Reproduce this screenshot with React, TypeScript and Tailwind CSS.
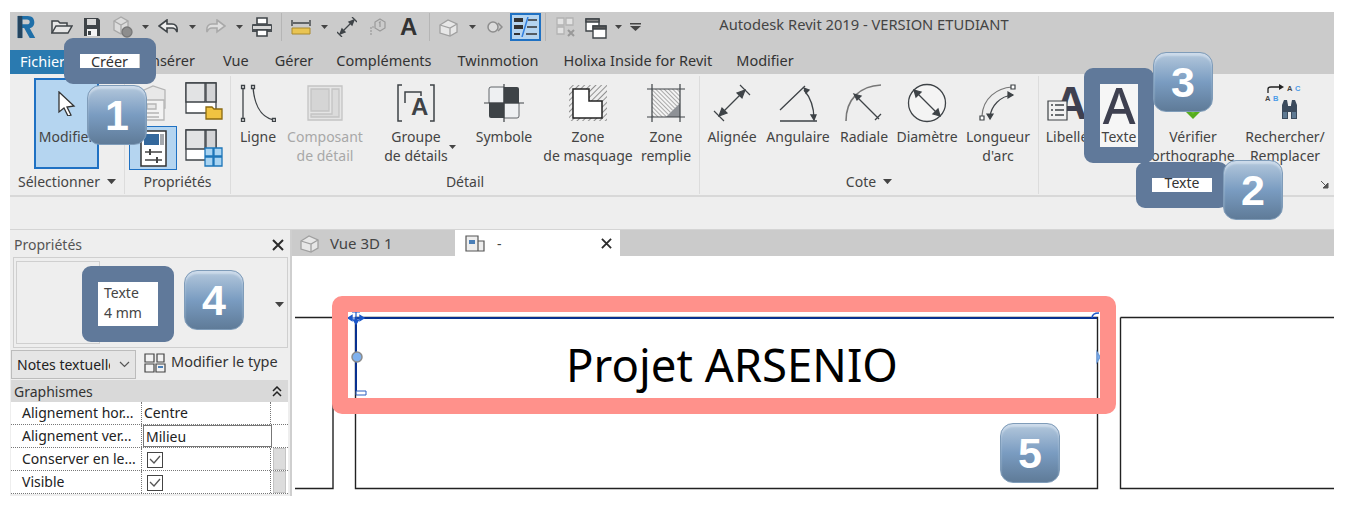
import React from "react";

const D = "#3f4448";

function Drop({ w = 7 }: { w?: number }) {
  return (
    <svg width={w} height={w * 0.57} viewBox="0 0 7 4" className="shrink-0">
      <path d="M0 0h7L3.5 4z" fill="#444" />
    </svg>
  );
}

function Tool({ w, lines, icon, ml = 0, faded = false }: { w: number; lines: string[]; icon: React.ReactNode; ml?: number; faded?: boolean }) {
  return (
    <div style={{ width: w, marginLeft: ml }} className={`flex flex-col items-center shrink-0 ${faded ? "text-[#a8a8a8]" : "text-[#444]"}`}>
      <div className="h-[51px] w-full flex items-center justify-center pt-[2px]">{icon}</div>
      {lines.map((l) => (
        <div key={l} className="leading-[19px] whitespace-nowrap">{l}</div>
      ))}
    </div>
  );
}

function Panel({ w, label, arrow, children, border = true }: { w: number; label: React.ReactNode; arrow?: boolean; children: React.ReactNode; border?: boolean }) {
  return (
    <div style={{ width: w }} className={`shrink-0 h-[118px] mt-[2px] flex flex-col ${border ? "border-r border-[#dcdcdc]" : ""}`}>
      <div className="h-[96px] flex">{children}</div>
      <div className="flex-1 flex items-center justify-center gap-[7px] text-[#444] pb-[2px]">
        {label}
        {arrow && <Drop w={9} />}
      </div>
    </div>
  );
}

function Badge({ n, cls }: { n: string; cls: string }) {
  return (
    <div className={`absolute ${cls} w-[60px] h-[60px] rounded-[13px] border border-[#7f9cb9] bg-gradient-to-b from-[#b4c8dc] via-[#7a9cc1] to-[#5f7b98] flex items-center justify-center text-white font-bold text-[43px] [font-family:'Liberation_Sans',sans-serif] shadow-[inset_0_3px_2px_rgba(225,235,245,0.55)]`}>
      {n}
    </div>
  );
}

function Frame({ cls, children }: { cls: string; children?: React.ReactNode }) {
  return <div className={`absolute ${cls} border-[16px] border-[#60799a] rounded-[9px] overflow-hidden`}>{children}</div>;
}

const IconR = () => (
  <svg width="20" height="24" viewBox="0 0 20 26">
    <path d="M1 1h11c5 0 7 3 7 7 0 3-2 6-5 6l6 11h-6L8 14H6v11H1z" fill="#1f6fa8" />
    <path d="M6 5v5h5c2 0 3-1 3-2.500S13 5 11 5z" fill="#cbcbcb" />
    <path d="M1 1h5v24H1z" fill="#25455f" />
  </svg>
);
const IconOpen = () => (
  <svg width="22" height="16" viewBox="0 0 22 16" fill="#e6e6e6" stroke={D} strokeWidth="1.500">
    <path d="M1 14V2h6l2 2h7v3" />
    <path d="M1 14l4-7h16l-4 7z" />
  </svg>
);
const IconSave = () => (
  <svg width="18" height="20" viewBox="0 0 18 20">
    <path d="M1 1h14l2 2v16H1z" fill="#3e4347" />
    <path d="M4 2h9v6H4z" fill="#d7d7d7" />
    <path d="M4 12h10v7H4z" fill="#f4f4f4" />
    <path d="M5 14h3v4H5z" fill="#3e4347" />
  </svg>
);
const IconCube = () => (
  <svg width="22" height="24" viewBox="0 0 22 24" fill="#dcdcdc" stroke="#a8a8a8" strokeWidth="1.300">
    <path d="M2 6l7-4 7 4v9l-7 4-7-4z" />
    <path d="M2 6l7 4 7-4M9 10v9" />
    <circle cx="15" cy="17" r="5" fill="#8d8d8d" stroke="#777" />
  </svg>
);
const IconUndo = ({ c = D, flip = false }: { c?: string; flip?: boolean }) => (
  <svg width="21" height="16" viewBox="0 0 21 16" fill={c === D ? "#eeeeee" : "#dedede"} stroke={c} strokeWidth="1.600" style={flip ? { transform: "scaleX(-1)" } : undefined}>
    <path d="M9 1L1 7l8 6V9h5c2 0 4 1 5 4 1-6-2-8-5-8H9z" />
  </svg>
);
const IconPrint = () => (
  <svg width="22" height="20" viewBox="0 0 22 20">
    <path d="M6 1h10v6H6z" fill="#fff" stroke={D} strokeWidth="1.600" />
    <path d="M2 7h18a1 1 0 011 1v7H1V8a1 1 0 011-1z" fill="#4a4f53" />
    <path d="M2 9h18v3H2z" fill="#d8d8d8" />
    <path d="M6 13h10v6H6z" fill="#fff" stroke={D} strokeWidth="1.600" />
  </svg>
);
const IconMeasure = () => (
  <svg width="20" height="15" viewBox="0 0 20 15">
    <path d="M1 0v6M19 0v6M2 3h16" stroke={D} strokeWidth="1.400" fill="none" />
    <path d="M1 8h18v6H1z" fill="#e9c452" stroke="#a98a2e" />
  </svg>
);
const IconAligned = () => (
  <svg width="20" height="20" viewBox="0 0 20 20" stroke={D} strokeWidth="1.300" fill={D}>
    <path d="M0 15l5 5M15 0l5 5" />
    <path d="M4 16L16 4" />
    <path d="M3 17l2-5 3 3zM17 3l-2 5-3-3z" />
  </svg>
);
const IconAlignedBig = () => (
  <svg width="38" height="38" viewBox="0 0 38 38" stroke={D} strokeWidth="1.200" fill={D}>
    <path d="M1 27l10 10M27 1l10 10" />
    <path d="M7 31L31 7" />
    <path d="M6 32l3-8 5 5zM32 6l-3 8-5-5z" />
  </svg>
);
const IconTag = () => (
  <svg width="18" height="20" viewBox="0 0 18 20" fill="none" stroke="#9a9a9a" strokeWidth="1.200">
    <path d="M2 18v-8h4" strokeDasharray="2 1" />
    <path d="M11 2l5 3v6l-5 3-5-3V5z" />
    <path d="M10 6l1-1v5" />
  </svg>
);
const IconHouse = ({ c = "#a0a0a0" }: { c?: string }) => (
  <svg width="19" height="19" viewBox="0 0 19 19" fill="#e7e7e7" stroke={c} strokeWidth="1.300">
    <path d="M1 7l8-5 9 4v8l-7 4-10-3z" />
    <path d="M1 7l10 3 7-4M11 10v8" />
  </svg>
);
const IconDiamond = () => (
  <svg width="18" height="18" viewBox="0 0 18 18" fill="#dcdcdc" stroke="#8d8d8d" strokeWidth="1.500">
    <circle cx="8" cy="9" r="5" />
    <path d="M13 5l4 4-4 4" fill="none" />
  </svg>
);
const IconToggle = () => (
  <div className="w-[31px] h-[28px] bg-[#b5d5f0] border-2 border-[#1f71c3] flex items-center justify-center">
    <svg width="25" height="20" viewBox="0 0 25 20">
      <path d="M1 1h9v4H1zM1 8h9v4H1zM1 16h6v2H1z" fill="#333" />
      <path d="M15 3h9M14 10h10M13 17h11" stroke="#333" strokeWidth="1.500" />
      <path d="M15 0L9 20" stroke="#2f7fe0" strokeWidth="1.500" />
    </svg>
  </div>
);
const IconHide = () => (
  <svg width="20" height="22" viewBox="0 0 20 22" fill="#e2e2e2" stroke="#b3b3b3" strokeWidth="1.300">
    <path d="M1 2h7v7H1zM10 2h7v7h-7zM1 11h7v7H1z" />
    <path d="M12 14l6 6M18 14l-6 6" stroke="#999" strokeWidth="2" />
  </svg>
);
const IconWindows = () => (
  <svg width="22" height="24" viewBox="0 0 22 24" fill="#fff" stroke={D} strokeWidth="1.400">
    <path d="M1 4h13v12H1z" />
    <path d="M1 4h13v3H1z" fill="#888" />
    <path d="M8 11h13v12H8z" />
    <path d="M8 11h13v3H8z" fill="#555" />
  </svg>
);
const IconMenu = () => (
  <svg width="11" height="8" viewBox="0 0 11 8">
    <path d="M0 0h11v1.500H0z" fill="#444" />
    <path d="M0 3h11L5.500 8z" fill="#444" />
  </svg>
);
const IconCursor = () => (
  <svg width="18" height="25" viewBox="0 0 18 25">
    <path d="M1 1l15 14-7 1 4 8-3 1-4-8-5 4z" fill="#fff" stroke="#333" strokeWidth="1.300" />
  </svg>
);
const IconFolderPanel = ({ grid = false }: { grid?: boolean }) => (
  <svg width="38" height="38" viewBox="0 0 38 38">
    <path d="M1 1h30v30H1z" fill="#fff" stroke="#3e4347" strokeWidth="1.300" />
    <path d="M1 1h19v19H1z" fill="#e2e3e4" stroke="#3e4347" strokeWidth="1.300" />
    <path d="M21 1h10v19H21z" fill="#d3d4d6" stroke="#3e4347" strokeWidth="1.300" />
    {grid ? (
      <g fill="#a9d4f2" stroke="#1d76b9" strokeWidth="1.300">
        <path d="M20 19h8v8h-8zM29 19h8v8h-8zM20 28h8v9h-8zM29 28h8v9h-8z" />
      </g>
    ) : (
      <path d="M21 25h6l2 2h8v10H21z" fill="#f0c341" stroke="#8b6a11" strokeWidth="1.300" />
    )}
  </svg>
);
const IconFamily = () => (
  <svg width="28" height="36" viewBox="0 0 28 36" fill="#e8e8e8" stroke="#b5b5b5" strokeWidth="1.300">
    <path d="M5 5l9-4 12 4v18H5z" />
    <path d="M3 15h22v20H3z" fill="#f3f3f3" />
    <path d="M8 19h9v5H8zM8 28h12M8 32h12" />
  </svg>
);
const IconProps = () => (
  <svg width="27" height="37" viewBox="0 0 27 37">
    <path d="M1 1h25v35H1z" fill="#fff" stroke="#333" strokeWidth="1.500" />
    <path d="M4 4h15v11H4z" fill="#34689c" />
    <path d="M20 4h4v11h-4z" fill="#a5a9ae" />
    <path d="M5 22h17M5 30h17" stroke="#444" strokeWidth="1.300" />
    <path d="M10 19v6M17 27v6" stroke="#444" strokeWidth="2" />
  </svg>
);
const IconLine = () => (
  <svg width="36" height="38" viewBox="0 0 36 38" fill="none" stroke="#3e4347" strokeWidth="1.300">
    <path d="M3 3v33" />
    <path d="M13 3c1 14 6 30 21 33" />
    <g fill="#fff">
      <path d="M1.500 1.500h3v3h-3zM11.500 1.500h3v3h-3zM1.500 34.500h3v3h-3zM32.500 34.500h3v3h-3z" />
    </g>
  </svg>
);
const IconComposant = () => (
  <svg width="36" height="36" viewBox="0 0 36 36" fill="#e5e5e5" stroke="#c4c4c4" strokeWidth="1.300">
    <path d="M1 1h34v34H1z" />
    <path d="M4 4h18v22H4z" fill="#d5d5d5" />
    <path d="M25 4h7v28H4v-3h21z" fill="#dbdbdb" />
  </svg>
);
const IconGroupe = () => (
  <svg width="38" height="38" viewBox="0 0 38 38" fill="none" stroke="#3e4347" strokeWidth="1.500">
    <path d="M5 1H1v36h4M33 1h4v36h-4" />
    <path d="M8 19V8h16v4" />
    <text x="14" y="31" fontSize="24" fontWeight="700" stroke="none" fill="#3e4347" fontFamily="Liberation Sans, sans-serif">A</text>
  </svg>
);
const IconSymbol = () => (
  <svg width="40" height="38" viewBox="0 0 40 38">
    <path d="M7 3h13v16H5V5a2 2 0 012-2z" fill="#eef0f2" stroke="#3e4347" strokeWidth=".8" />
    <path d="M20 3h13a2 2 0 012 2v14H20z" fill="#3e4347" />
    <path d="M5 19h15v15H7a2 2 0 01-2-2z" fill="#3e4347" />
    <path d="M20 19h15v13a2 2 0 01-2 2H20z" fill="#eef0f2" stroke="#3e4347" strokeWidth=".8" />
    <path d="M20 0v38M0 19h40" stroke="#3e4347" strokeWidth="1.200" />
  </svg>
);
const IconMask = () => (
  <svg width="40" height="38" viewBox="0 0 40 38">
    <defs>
      <pattern id="hm" width="4" height="4" patternUnits="userSpaceOnUse" patternTransform="rotate(-45)">
        <path d="M0 0h4" stroke="#333" strokeWidth="1" />
      </pattern>
    </defs>
    <path d="M1 1h38v36H1z" fill="url(#hm)" />
    <path d="M5 5h16v12h13v17H5z" fill="#fff" stroke="#222" strokeWidth="1.500" />
  </svg>
);
const IconFilled = () => (
  <svg width="38" height="38" viewBox="0 0 38 38">
    <defs>
      <pattern id="hf" width="3" height="3" patternUnits="userSpaceOnUse" patternTransform="rotate(45)">
        <path d="M0 0h3" stroke="#777" strokeWidth="1.200" />
      </pattern>
    </defs>
    <path d="M5 5h28v28H5z" fill="#f4f4f4" />
    <path d="M5 5h28v14L19 33H5z" fill="url(#hf)" />
    <path d="M33 19v14H19z" fill="#8e9196" />
    <path d="M0 5h38M0 33h38M5 0v38M33 0v38" stroke="#3e4347" strokeWidth="1.200" />
  </svg>
);
const IconAngular = () => (
  <svg width="38" height="38" viewBox="0 0 38 38" fill="none" stroke="#3e4347" strokeWidth="1.300">
    <path d="M1 26L26 2M1 37h37" />
    <path d="M25 6c6 7 10 17 10 29" />
    <path d="M25 4l5 2-3 3zM35 36l-3-5h5z" fill="#3e4347" />
  </svg>
);
const IconRadial = () => (
  <svg width="38" height="38" viewBox="0 0 38 38" fill="none" stroke="#3e4347" strokeWidth="1.300">
    <path d="M1 37C1 15 15 2 36 1" stroke="#777" strokeWidth="1.600" />
    <path d="M10 11l24 24M30 36l6-6" />
    <path d="M9 10l7 2-4 4z" fill="#3e4347" />
  </svg>
);
const IconDiameter = () => (
  <svg width="40" height="40" viewBox="0 0 40 40" fill="#f4f4f4" stroke="#3e4347" strokeWidth="1.300">
    <circle cx="20" cy="20" r="18.500" />
    <path d="M9 9l22 22" />
    <path d="M7 7l7 2-5 5zM33 33l-7-2 5-5z" fill="#3e4347" />
  </svg>
);
const IconArc = () => (
  <svg width="38" height="38" viewBox="0 0 38 38" fill="none" stroke="#3e4347" strokeWidth="1.200">
    <path d="M3 32C4 14 18 4 33 3" stroke="#777" />
    <path d="M11 33C12 22 21 12 34 11" />
    <path d="M34 11l-5-3v6zM11 35l-3-5h6z" fill="#3e4347" />
    <path d="M1 32h4v4H1zM32 1h4v4h-4z" fill="#fff" />
  </svg>
);
const IconLabel = () => (
  <svg width="50" height="40" viewBox="0 0 50 40">
    <text x="7" y="36" fontSize="46" fontWeight="700" fill="#3e4050" fontFamily="Liberation Sans, sans-serif">A</text>
    <path d="M1 18h19v19H1z" fill="#f1f1f1" stroke="#3e4347" strokeWidth="1.200" />
    <path d="M4 22h2M4 27h2M4 32h2M8 22h9M8 27h9M8 32h9" stroke="#3e4347" strokeWidth="1.300" />
  </svg>
);
const IconSpell = () => (
  <svg width="34" height="42" viewBox="0 0 34 42">
    <path d="M8 28l9 9 9-9z" fill="#56ad1f" />
    <path d="M17 32l6-6h-12z" fill="#6cc52c" />
  </svg>
);
const IconFind = () => (
  <svg width="40" height="40" viewBox="0 0 40 40">
    <path d="M3 10V6c0-2 2-2 3-2h8" fill="none" stroke="#222" strokeWidth="1.300" />
    <path d="M14 1l5 3-5 3z" fill="#222" />
    <text x="22" y="8" fontSize="7.500" fontWeight="700" fill="#444" fontFamily="Liberation Sans, sans-serif">A</text>
    <text x="30" y="8" fontSize="7.500" fontWeight="700" fill="#4a9be8" fontFamily="Liberation Sans, sans-serif">C</text>
    <text x="0" y="18" fontSize="7.500" fontWeight="700" fill="#444" fontFamily="Liberation Sans, sans-serif">A</text>
    <text x="8" y="18" fontSize="7.500" fontWeight="700" fill="#4a9be8" fontFamily="Liberation Sans, sans-serif">B</text>
    <path d="M17 36V22l2-5h3l1 5v14zM26 36V22l1-5h3l2 5v14zM23 23h3v6h-3z" fill="#3b4a5c" />
    <path d="M18 29h4v6h-4zM27 29h4v6h-4z" fill="#5e7992" />
  </svg>
);
const IconEdit = () => (
  <svg width="22" height="20" viewBox="0 0 22 20" fill="#f2f2f2" stroke="#444" strokeWidth="1.200">
    <path d="M1 1h9v8H1zM13 1h7v8h-7zM1 11h9v8H1z" />
    <path d="M12 11h9v8h-9z" />
    <path d="M14 13h5v2h-5z" fill="#4a7fb8" stroke="none" />
  </svg>
);
const Check = () => (
  <div className="w-[16px] h-[16px] border-[1.5px] border-[#444] bg-white flex items-center justify-center">
    <svg width="12" height="10" viewBox="0 0 12 10"><path d="M1 4l4 4 6-7" fill="none" stroke="#555" strokeWidth="1.300" /></svg>
  </div>
);
const Close = ({ s = 12 }: { s?: number }) => (
  <svg width={s} height={s} viewBox="0 0 12 12"><path d="M1 1l10 10M11 1L1 11" stroke="#2b2b2b" strokeWidth="2" /></svg>
);

function Row({ name, value, edit, check, scroll }: { name: string; value?: string; edit?: boolean; check?: boolean; scroll?: boolean }) {
  return (
    <div className="flex h-[23px] border-b border-dotted border-[#777] bg-white text-[#222]">
      <div className="w-[131px] pl-[11px] border-r border-dotted border-[#777] whitespace-nowrap overflow-hidden leading-[21px]">{name}</div>
      <div className={`w-[129px] pl-[2px] border-r border-dotted border-[#777] leading-[21px] ${edit ? "border border-solid border-[#111] ml-[1px] w-[128px]" : ""}`}>
        {check ? <div className="pl-[3px] pt-[4px]"><Check /></div> : value}
      </div>
      <div className={`flex-1 ${scroll ? "bg-[#dcdcdc] border border-[#c4c4c4] mx-[2px]" : ""}`} />
    </div>
  );
}

export default function App() {
  return (
    <div className="relative w-[1370px] h-[518px] bg-white overflow-hidden [font-family:'Noto_Sans',sans-serif] text-[14px]">
      <div className="pt-[12px] pl-[10px] w-[1334px]">
        {/* Quick access */}
        <div className="h-[38px] pb-[8px] bg-[#cbcbcb] flex items-center text-[#444]">
          <div className="ml-[6px]"><IconR /></div>
          <div className="ml-[15px]"><IconOpen /></div>
          <div className="ml-[10px]"><IconSave /></div>
          <div className="ml-[11px]"><IconCube /></div>
          <div className="ml-[8px]"><Drop /></div>
          <div className="ml-[9px]"><IconUndo /></div>
          <div className="ml-[10px]"><Drop /></div>
          <div className="ml-[9px]"><IconUndo c="#a9a9a9" flip /></div>
          <div className="ml-[10px]"><Drop /></div>
          <div className="ml-[8px]"><IconPrint /></div>
          <div className="ml-[8px] w-px h-[28px] bg-[#b5b5b5]" />
          <div className="ml-[9px]"><IconMeasure /></div>
          <div className="ml-[10px]"><Drop /></div>
          <div className="ml-[9px]"><IconAligned /></div>
          <div className="ml-[12px]"><IconTag /></div>
          <div className="ml-[13px] text-[24px] leading-none font-bold text-[#333] [font-family:'Liberation_Sans',sans-serif]">A</div>
          <div className="ml-[12px] w-px h-[28px] bg-[#b5b5b5]" />
          <div className="ml-[9px]"><IconHouse /></div>
          <div className="ml-[11px]"><Drop /></div>
          <div className="ml-[9px]"><IconDiamond /></div>
          <div className="ml-[7px]"><IconToggle /></div>
          <div className="ml-[4px] w-px h-[28px] bg-[#b5b5b5]" />
          <div className="ml-[10px]"><IconHide /></div>
          <div className="ml-[9px]"><IconWindows /></div>
          <div className="ml-[8px]"><Drop /></div>
          <div className="ml-[8px]"><IconMenu /></div>
          <div className="ml-[78px] text-[14.700px] pb-[6px] whitespace-nowrap text-[#444]">Autodesk Revit 2019 - VERSION ETUDIANT</div>
        </div>

        {/* Tabs */}
        <div className="h-[24px] bg-[#cbcbcb] flex items-center text-[#333] whitespace-nowrap text-[14.500px]">
          <div className="w-[54px] h-full bg-[#2a7ab0] text-white pl-[10px] leading-[22px]">Fichier</div>
          <div className="ml-[16px] w-[59px] h-full bg-white text-center leading-[22px]">Créer</div>
          <div className="flex items-center h-full pb-[2px]">
            <div className="ml-[7px] w-[52px] shrink-0">Insérer</div>
            <div className="ml-[25px]">Vue</div>
            <div className="ml-[26px]">Gérer</div>
            <div className="ml-[23px]">Compléments</div>
            <div className="ml-[26px]">Twinmotion</div>
            <div className="ml-[25px]">Holixa Inside for Revit</div>
            <div className="ml-[24px]">Modifier</div>
          </div>
        </div>

        {/* Ribbon */}
        <div className="h-[121px] bg-[#eeeeee] flex border-b-2 border-[#d8d8d8] box-content">
          <Panel w={115} label="Sélectionner" arrow>
            <div className="ml-[24px] mt-[2px] w-[65px] h-[91px] bg-[#b5d5f0] border-2 border-[#1f71c3] flex flex-col items-center text-[#444]">
              <div className="h-[47px] flex items-center justify-center"><IconCursor /></div>
              <div className="leading-[19px]">Modifier</div>
            </div>
          </Panel>
          <Panel w={106} label="Propriétés">
            <div className="ml-[3px] w-[50px] flex flex-col items-center">
              <div className="h-[50px] flex items-center justify-center pt-[4px]"><IconFamily /></div>
              <div className="w-[48px] h-[44px] bg-[#b5d5f0] border border-[#1f71c3] flex items-center justify-center"><IconProps /></div>
            </div>
            <div className="ml-[7px] flex flex-col gap-[9px] pt-[6px]">
              <IconFolderPanel />
              <IconFolderPanel grid />
            </div>
          </Panel>
          <Panel w={469} label="Détail">
            <Tool ml={8} w={38} lines={["Ligne"]} icon={<IconLine />} />
            <Tool ml={8} w={80} faded lines={["Composant", "de détail"]} icon={<IconComposant />} />
            <Tool ml={18} w={66} lines={["Groupe", "de détails"]} icon={<IconGroupe />} />
            <div className="w-[7px] mt-[69px]"><Drop /></div>
            <Tool ml={18} w={60} lines={["Symbole"]} icon={<IconSymbol />} />
            <Tool ml={8} w={92} lines={["Zone", "de masquage"]} icon={<IconMask />} />
            <Tool ml={6} w={52} lines={["Zone", "remplie"]} icon={<IconFilled />} />
          </Panel>
          <Panel w={339} label="Cote" arrow>
            <Tool ml={6} w={52} lines={["Alignée"]} icon={<IconAlignedBig />} />
            <Tool ml={7} w={66} lines={["Angulaire"]} icon={<IconAngular />} />
            <Tool ml={8} w={50} lines={["Radiale"]} icon={<IconRadial />} />
            <Tool ml={7} w={62} lines={["Diamètre"]} icon={<IconDiameter />} />
            <Tool ml={7} w={66} lines={["Longueur", "d'arc"]} icon={<IconArc />} />
          </Panel>
          <Panel w={296} border={false} label={<span />}>
            <Tool ml={6} w={44} lines={["Libellé"]} icon={<div className="ml-[10px]"><IconLabel /></div>} />
            <div className="ml-[11px] w-[38px] h-[64px] mt-[8px] bg-[#f6f6f6] flex flex-col items-center text-[#444] shrink-0">
              <div className="h-[43px] text-[50px] leading-[42px] font-medium text-[#3e4050]">A</div>
              <div className="leading-[19px]">Texte</div>
            </div>
            <Tool ml={6} w={98} lines={["Vérifier", "orthographe"]} icon={<IconSpell />} />
            <Tool ml={3} w={80} lines={["Rechercher/", "Remplacer"]} icon={<IconFind />} />
            <div className="absolute left-[1320px] top-[180px]">
              <svg width="9" height="9" viewBox="0 0 9 9"><path d="M1 1l6 6M8 3v5H3z" stroke="#555" fill="#555" /></svg>
            </div>
          </Panel>
        </div>

        {/* Options bar */}
        <div className="h-[33px] bg-[#eeeeee] border-b border-[#d4d4d4]" />

        {/* Main */}
        <div className="flex h-[266px]">
          <div className="w-[282px] shrink-0 bg-[#eeeeee] border-r-[2px] border-[#cfcfcf] flex flex-col pr-[1px]">
            <div className="h-[27px] flex items-center justify-between pl-[4px] pr-[5px] pt-[2px] text-[#555]">
              <span>Propriétés</span>
              <Close />
            </div>
            <div className="ml-[3px] mr-[1px] h-[91px] border border-[#cfcfcf] flex items-center relative">
              <div className="ml-[2px] w-[84px] h-[83px] border border-[#cfcfcf]" />
              <div className="absolute right-[3px] top-[44px]"><Drop w={9} /></div>
            </div>
            <div className="h-[32px] flex items-center ml-[1px]">
              <div className="w-[125px] h-[29px] bg-[#e5e5e5] border-[1.500px] border-[#bcbcbc] pl-[5px] flex items-center justify-between pr-[5px] text-[#222] overflow-hidden">
                <span className="whitespace-nowrap w-[93px] overflow-hidden">Notes textuelles</span>
                <svg width="11" height="7" viewBox="0 0 11 7"><path d="M1 1l4.500 4.500L10 1" fill="none" stroke="#555" strokeWidth="1.200" /></svg>
              </div>
              <div className="ml-[8px] mb-[2px]"><IconEdit /></div>
              <span className="ml-[5px] mb-[4px] text-[14.500px] text-[#333] whitespace-nowrap">Modifier le type</span>
            </div>
            <div className="h-[22px] ml-[1px] mr-[1px] bg-[#d9d9d9] flex items-center justify-between pl-[3px] pr-[6px] text-[#333]">
              <span>Graphismes</span>
              <svg width="10" height="11" viewBox="0 0 10 11"><path d="M1 5l4-4 4 4M1 10l4-4 4 4" fill="none" stroke="#222" strokeWidth="1.500" /></svg>
            </div>
            <div className="ml-[1px] mr-[1px]">
              <Row name="Alignement hor..." value="Centre" />
              <Row name="Alignement ver..." value="Milieu" edit />
              <Row name="Conserver en le..." check scroll />
              <Row name="Visible" check scroll />
            </div>
          </div>

          <div className="flex-1 flex flex-col min-w-0">
            <div className="h-[26px] bg-[#cbcbcb] flex text-[#444]">
              <div className="w-[163px] flex items-center pl-[8px] gap-[11px] text-[15px]">
                <IconHouse />
                <span>Vue 3D 1</span>
              </div>
              <div className="w-[165px] bg-white flex items-center pl-[10px] pr-[8px]">
                <svg width="20" height="17" viewBox="0 0 20 17" fill="#eee" stroke="#555" strokeWidth="1.200"><path d="M1 1h12v15H1zM13 6h6v10h-6z" /><path d="M4 5h6v4H4z" fill="#4a7fb8" stroke="none" /></svg>
                <span className="ml-[12px]">-</span>
                <span className="ml-auto"><Close s={11} /></span>
              </div>
            </div>
            <div className="relative flex-1 bg-white">
              <svg width="1042" height="240" viewBox="0 0 1042 240" className="absolute left-0 top-0" fill="none" stroke="#222" strokeWidth="1.400">
                <path d="M3 61.500h38v171H3" />
                <path d="M63.500 61.500h742v171h-742z" />
                <path d="M828.500 61.500h214M828.500 61.500v171h214" />
                <path d="M64 62h741" stroke="#08308f" strokeWidth="2" />
                <path d="M64 62v73" stroke="#08308f" strokeWidth="2" />
                <path d="M64 135h10v4H64z" stroke="#2a5fc0" strokeWidth="1" />
                <path d="M56 62h16M64 56v12M60 56h8" stroke="#1d57c8" strokeWidth="1.200" />
                <path d="M56 62l4-2.500v5zM72 62l-4-2.500v5zM64 68l-2.500-4h5z" fill="#1d57c8" stroke="#1d57c8" />
                <circle cx="65" cy="101" r="5" fill="#7fb1ee" stroke="#8b8b8b" strokeWidth="1.500" />
                <path d="M805 96l3 5-3 5z" fill="#7fb1ee" stroke="#6c9ad8" />
                <path d="M800 62c0-4 3-5 7-5" stroke="#1d57c8" strokeWidth="1.400" />
              </svg>
            </div>
          </div>
        </div>
      </div>

      {/* Annotations */}
      <Frame cls="left-[64px] top-[38px] w-[92px] h-[46px]" />
      <Frame cls="left-[1136px] top-[162px] w-[92px] h-[46px]">
        <div className="w-full h-full bg-white text-[#333] text-center leading-[10px]">Texte</div>
      </Frame>
      <Frame cls="left-[1084px] top-[68px] w-[70px] h-[95px]" />
      <Frame cls="left-[82px] top-[266px] w-[92px] h-[76px]">
        <div className="w-full h-full bg-white pl-[6px] leading-[20px] text-[#444] pt-[1px]">
          <div>Texte</div>
          <div>4 mm</div>
        </div>
      </Frame>
      <div className="absolute left-[332px] top-[296px] w-[784px] h-[118px] border-[16px] border-[#ff918b] rounded-[10px] flex items-center justify-center pl-[16px] pt-[20px]">
        <span className="text-[45.500px] leading-none text-black whitespace-nowrap">Projet ARSENIO</span>
      </div>
      <Badge n="1" cls="left-[87px] top-[85px]" />
      <Badge n="2" cls="left-[1223px] top-[160px]" />
      <Badge n="3" cls="left-[1153px] top-[52px]" />
      <Badge n="4" cls="left-[184px] top-[270px]" />
      <Badge n="5" cls="left-[1000px] top-[423px]" />
    </div>
  );
}
